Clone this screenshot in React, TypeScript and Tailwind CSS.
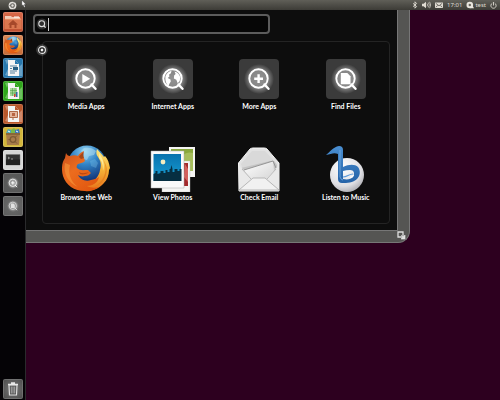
import { useState, type ReactNode } from 'react';

type GlyphKind = 'play' | 'globe' | 'plus' | 'file';

function Lens({ kind, id, className }: { kind: GlyphKind; id: string; className: string }) {
  return (
    <svg viewBox="0 0 40 40" className={className} aria-hidden="true">
      <defs>
        <radialGradient id={id}>
          <stop offset="0" stopColor="#fff" stopOpacity=".45" />
          <stop offset=".6" stopColor="#fff" stopOpacity=".38" />
          <stop offset="1" stopColor="#fff" stopOpacity="0" />
        </radialGradient>
      </defs>
      <circle cx="20" cy="20" r="15" fill={`url(#${id})`} />
      <circle cx="19.500" cy="19.500" r="9.200" fill="none" stroke="#fff" strokeWidth="1.900" />
      <path d="M25.500 25.500l4 4.300" stroke="#fff" strokeWidth="2.400" strokeLinecap="round" />
      {kind === 'play' && <path d="M16.300 15v9.500l7.900-4.700z" fill="#fff" />}
      {kind === 'plus' && <path d="M19.600 15.300v8.800M15.200 19.700H24" stroke="#fff" strokeWidth="2.400" />}
      {kind === 'file' && <path d="M14.800 14h6.500l3.200 3.200v8h-9.700z" fill="#fff" />}
      {kind === 'globe' && (
        <path
          d="M12.500 17c1.500-3.500 4-5 6-5l-.6 2.300-2 1.500.7 1.500-1.800 1.600 2.700 1.700.3 2-1.500 2.500-.6 1.800c-2.500-1.400-3.800-5.300-3.200-9.900zM21.500 12.500c3 .8 5 2.700 5.800 6l-.6 3.500-2 2.300-1.400-3.600-2.400-1.200.2-3 1.500-1.500z"
          fill="#fff"
        />
      )}
    </svg>
  );
}

function FirefoxArt({ id, className }: { id: string; className: string }) {
  return (
    <svg viewBox="0 0 48 48" className={className} aria-hidden="true">
      <defs>
        <radialGradient id={`${id}-sea`} cx=".45" cy=".15" r=".85">
          <stop offset="0" stopColor="#8ed0f0" />
          <stop offset=".4" stopColor="#3183c6" />
          <stop offset="1" stopColor="#0b2467" />
        </radialGradient>
        <linearGradient id={`${id}-fox`} x1="0" y1="0" x2=".8" y2="1">
          <stop offset="0" stopColor="#c9501c" />
          <stop offset=".45" stopColor="#ec6c1e" />
          <stop offset="1" stopColor="#e0560f" />
        </linearGradient>
        <linearGradient id={`${id}-tail`} x1="0" y1="0" x2="0" y2="1">
          <stop offset="0" stopColor="#fbe67c" />
          <stop offset=".5" stopColor="#f6b236" />
          <stop offset="1" stopColor="#e8701a" />
        </linearGradient>
      </defs>
      <circle cx="25" cy="20" r="19.500" fill={`url(#${id}-sea)`} />
      <path d="M22 3c5-1 9 0 12 3l-2 4-5 1-2 4-4-1 1-5-3-3z" fill="#c5ebf7" opacity=".45" />
      <path d="M28 16l5-2 3 4-2 5-5-2z" fill="#7ec2e8" opacity=".35" />
      <path
        d="M35 4c2 3 5 5 7 8l1-1c3 3 4 7 5 12l-1 2c0 5-2 10-5 13-5 6-12 8-19 8l1-7c8-2 13-7 14-14 2-6 0-10-2-13-2-2-2-5-1-8z"
        fill={`url(#${id}-tail)`}
      />
      <path d="M41 14c4 8 3 15-1 21-3 4-7 7-12 8 8-1 14-6 16-13 2-6 0-11-3-16z" fill="#df7c1d" opacity=".7" />
      <path d="M37 8c4 6 6 11 4 18 0-6-1-10-4-13z" fill="#fff3a6" opacity=".8" />
      <path
        d="M4 8c1 2 2 3 4 3 3-1 6-1 8 0 1-2 3-4 6-5-1 3-1 5 0 7l1 3c-2 2-5 2-7 3-1 1-2 3-1 4 3 3 7 2 11 2l3 3c-2 2-3 3-6 3-3 1-5 0-7-1 2 4 7 7 13 5 3-1 5-1 8-3-1 6-7 9-12 9 4 2 8 2 12 1-4 3-9 5-14 4C12 46 4 40 1 31-1 24 0 17 3 13z"
        fill={`url(#${id}-fox)`}
      />
      <path d="M3 18c-2 10 3 20 13 24C8 36 6 28 8 20z" fill="#f79a3c" opacity=".6" />
      <path d="M17 12c1-2 3-4 5-5-1 2-1 4 0 6l-3 1z" fill="#7d3413" opacity=".6" />
      <path d="M17 27c3 2 7 1 10 0-2 2-6 3-9 2z" fill="#9e330d" opacity=".6" />
    </svg>
  );
}

function PhotosArt() {
  return (
    <svg viewBox="0 0 46 46" className="size-[46px]" aria-hidden="true">
      <defs>
        <linearGradient id="photo-sky" x1="0" y1="0" x2="0" y2="1">
          <stop offset="0" stopColor="#0872ae" />
          <stop offset="1" stopColor="#19a0d5" />
        </linearGradient>
      </defs>
      <path d="M19 1h26v30H19z" fill="#f5f5f3" />
      <path d="M21 3h22v22H21z" fill="#89a83c" />
      <path d="M32 10c4-4 8-4 11-3v18H32z" fill="#b9cb70" opacity=".6" />
      <path d="M12 15h28v31H12z" fill="#f5f5f3" stroke="#bbb" strokeWidth=".4" />
      <path d="M14 17h24v23H14z" fill="#a32a2c" />
      <path d="M35 18l3 5v13l-4-5z" fill="#d4605c" />
      <path d="M1 5h33v37H1z" fill="#fafafa" stroke="#aaa" strokeWidth=".5" />
      <path d="M3.500 8H31v27H3.500z" fill="url(#photo-sky)" />
      <circle cx="13" cy="16" r="2.400" fill="#f4edc0" />
      <path
        d="M3.500 28l2-1v-2h2v3l3-1v-2h3v2h2v-3h2v2h2v-3h1l1-4 1 4v3h2v-3h3v2h2v-2h2v12h-28z"
        fill="#062f42"
      />
    </svg>
  );
}

function MailArt() {
  return (
    <svg viewBox="0 0 44 46" className="h-[46px] w-11" aria-hidden="true">
      <defs>
        <linearGradient id="mail-paper" x1="0" y1="0" x2="1" y2="1">
          <stop offset="0" stopColor="#fff" />
          <stop offset="1" stopColor="#d4d4d4" />
        </linearGradient>
      </defs>
      <path d="M1.500 17L13 3q1.500-1 3-1h11q2 0 3 1l12 14v28h-40z" fill="#e2e2e2" stroke="#f4f4f4" />
      <path d="M4 18L15 5h13l12 13-4 12H8z" fill="#d9d9d9" />
      <path d="M4 22l7 10h21l8-10v-3l-3-4-4 0z" fill="#c4c4c4" />
      <path d="M7 24l29-9 1 9-7 11H14z" fill="url(#mail-paper)" />
      <path d="M7 24l29-9 3 7" fill="none" stroke="#8d8d8d" strokeWidth=".9" />
      <path d="M2 19l13 14L2 44zM42 19L29 33l13 11z" fill="#e9e9e9" />
      <path d="M5 23l9 10M39 23l-9 10" stroke="#a5a5a5" strokeWidth=".7" />
      <path d="M2 44l14-12h12l14 12z" fill="#f1f1f1" stroke="#aaa" strokeWidth=".8" />
    </svg>
  );
}

function MusicArt() {
  return (
    <svg viewBox="0 0 44 46" className="h-[46px] w-11" aria-hidden="true">
      <defs>
        <radialGradient id="music-disc" cx=".4" cy=".3" r=".75">
          <stop offset="0" stopColor="#fff" />
          <stop offset=".7" stopColor="#dedee2" />
          <stop offset="1" stopColor="#a9a9ae" />
        </radialGradient>
        <linearGradient id="music-swan" x1="0" y1="0" x2="0" y2="1">
          <stop offset="0" stopColor="#4a8fd2" />
          <stop offset="1" stopColor="#2563a8" />
        </linearGradient>
      </defs>
      <circle cx="23" cy="29" r="17" fill="url(#music-disc)" />
      <path
        fillRule="evenodd"
        d="M2 9C6 6 9 1 15 0q4 0 4 4v17c6-3 12-3 15 0 3 4 2 9-1 12-4 4-10 4-15 4q-4 0-4-4V8C10 6 7 8 2 9zM19 25v8c5 1 8 0 10-2 2-4 1-7-3-7q-4 0-7 1z"
        fill="url(#music-swan)"
      />
      <path d="M19 31c4 0 6-3 10-3" fill="none" stroke="#5b9ada" strokeWidth="1.200" />
      <path d="M16 4v27q1 3 3 3" fill="none" stroke="#77aee2" strokeWidth=".8" />
      <path d="M26 31.500q3-.5 3.500-2.500" fill="none" stroke="#fff" strokeWidth="1.200" />
    </svg>
  );
}

type Shortcut = { label: string; art: ReactNode };

function tile(kind: GlyphKind) {
  return (
    <span className="block rounded-sm bg-[#3b3b3b]">
      <Lens kind={kind} id={`tile-${kind}`} className="size-10" />
    </span>
  );
}

const lenses: Shortcut[] = [
  { label: 'Media Apps', art: tile('play') },
  { label: 'Internet Apps', art: tile('globe') },
  { label: 'More Apps', art: tile('plus') },
  { label: 'Find Files', art: tile('file') },
];

const apps: Shortcut[] = [
  { label: 'Browse the Web', art: <FirefoxArt id="web" className="size-12" /> },
  { label: 'View Photos', art: <PhotosArt /> },
  { label: 'Check Email', art: <MailArt /> },
  { label: 'Listen to Music', art: <MusicArt /> },
];

function ShortcutRow({ items, artBox }: { items: Shortcut[]; artBox: string }) {
  return (
    <div className="grid grid-cols-4">
      {items.map((item) => (
        <button
          key={item.label}
          type="button"
          className="flex flex-col items-center font-['Lato',sans-serif] text-[7px] leading-[8px] font-bold whitespace-nowrap text-white"
        >
          <span className={`flex items-center justify-center ${artBox}`}>{item.art}</span>
          {item.label}
        </button>
      ))}
    </div>
  );
}

function DocumentArt({ color }: { color: string }) {
  return (
    <svg viewBox="0 0 20 20" className="size-5" aria-hidden="true">
      <path d="M2 2l4-1-2 6zM2 17l3-6v7zM16 9l3-3v12h-4z" fill="#fff" opacity=".3" />
      <path d="M5 2h7l4 4v12H5z" fill="#f4f4f4" />
      <path d="M12 2v4h4z" fill={color} />
      {color === '#2777ad' && (
        <>
          <path d="M7 8h7M7 13h7M7 15h5" stroke="#557f9c" />
          <path d="M10 9h5v3h-5z" fill="#285f83" />
          <path d="M7 10.500h2" stroke="#557f9c" />
        </>
      )}
      {color === '#2fa51b' && (
        <>
          <path d="M7 7h7v8H7z" fill="#a9d79b" />
          <path d="M7 9.500h7M7 12h7M9.500 7v8M12 7v8" stroke="#439b3a" strokeWidth=".5" />
          <path d="M11 16v-3h1.500v3z" fill="#cf4431" />
          <path d="M13 16v-5h1.500v5z" fill="#3067a6" />
        </>
      )}
      {color === '#b9572b' && (
        <>
          <path d="M6.500 7.500h8v6h-8z" fill="#e5b69e" stroke="#af6948" />
          <path d="M9 9h3v3H9z" fill="#b86442" />
          <path d="M10 14v2" stroke="#af6948" />
        </>
      )}
    </svg>
  );
}

const launcher: { name: string; tint: string; art: ReactNode }[] = [
  {
    name: 'Home Folder',
    tint: 'bg-linear-to-b from-[#d9694a] to-[#bd5030]',
    art: (
      <svg viewBox="0 0 20 20" className="size-5" aria-hidden="true">
        <path d="M2 4h6l1 1h8v3H2z" fill="#f1cbb9" />
        <path d="M11 5h5" stroke="#fff" />
        <path d="M1.500 7h17v10h-17z" fill="#d9764f" />
        <path d="M2 7h16" stroke="#ffb794" strokeWidth=".7" />
        <path d="M10 8l5 4.500h-1.500V16h-2v-3h-3v3h-2v-3.500H5z" fill="#a5482a" />
      </svg>
    ),
  },
  { name: 'Firefox', tint: 'bg-linear-to-b from-[#db8a58] to-[#c56b38]', art: <FirefoxArt id="dock" className="size-[18px]" /> },
  { name: 'Writer', tint: 'bg-[#2777ad]', art: <DocumentArt color="#2777ad" /> },
  { name: 'Calc', tint: 'bg-[#2fa51b]', art: <DocumentArt color="#2fa51b" /> },
  { name: 'Impress', tint: 'bg-[#b9572b]', art: <DocumentArt color="#b9572b" /> },
  {
    name: 'Software Centre',
    tint: 'bg-[#d3b63c]',
    art: (
      <svg viewBox="0 0 20 20" className="size-5" aria-hidden="true">
        <path d="M3 6l2-4 4 1 1 4z" fill="#4aa7b8" />
        <path d="M8 3l3-2 3 3-2 3H8z" fill="#78b94a" />
        <path d="M12 3l4-1 1 5h-5z" fill="#3979b8" />
        <path d="M5 4l2 1M13 4l2 1" stroke="#fff" />
        <path d="M3 6h14l-1 12H4z" fill="#a87c4a" />
        <path d="M3 6h14v2H3z" fill="#8a6638" />
        <circle cx="10" cy="12.500" r="2.800" fill="none" stroke="#7c5a33" strokeWidth="1.300" />
        <path d="M5.500 12.500h2M12.500 10l1.500-1.500M12.500 15l1.500 1.500" stroke="#7c5a33" />
      </svg>
    ),
  },
  {
    name: 'Terminal',
    tint: 'bg-[#d7d7d7]',
    art: (
      <svg viewBox="0 0 20 20" className="size-5" aria-hidden="true">
        <path d="M3 4.500h14v10.500H3z" fill="#343434" stroke="#777" strokeWidth=".5" />
        <path d="M3 9.500h14V15H3z" fill="#222" />
        <path d="M5 7l1.500 1L5 9M8 9h2" fill="none" stroke="#b5b5b5" strokeWidth=".8" />
      </svg>
    ),
  },
  { name: 'Applications', tint: 'bg-radial from-[#5c5c5c] to-[#565656]', art: <Lens kind="plus" id="dock-apps" className="size-4" /> },
  { name: 'Files and Folders', tint: 'bg-radial from-[#6c6c6c] to-[#5a5a5a]', art: <Lens kind="file" id="dock-files" className="size-4 opacity-80" /> },
];

function LauncherButton({ name, tint, children }: { name: string; tint: string; children: ReactNode }) {
  return (
    <button
      type="button"
      aria-label={name}
      className={`flex size-5 shrink-0 items-center justify-center overflow-hidden rounded-xs inset-ring inset-ring-white/15 ${tint}`}
    >
      {children}
    </button>
  );
}

function TopBar() {
  return (
    <header className="flex h-[10px] shrink-0 items-center bg-linear-to-b from-[#605f58] to-[#3d3c37] pr-[3px] font-['Noto_Sans',sans-serif] text-[6px] leading-[8px] text-[#dfdbd2]">
      <button type="button" aria-label="Dash home" className="ml-2">
        <svg viewBox="0 0 10 10" className="size-[9px]" aria-hidden="true">
          <circle cx="5" cy="5" r="4.300" fill="#e4e2dd" />
          <circle cx="5" cy="5" r="2" fill="none" stroke="#65635d" strokeWidth="1.200" />
          <path d="M1.500 5H3M6 2.500l1-1M6 7.500l1 1" stroke="#65635d" strokeWidth=".8" />
        </svg>
      </button>
      <svg viewBox="0 0 6 9" className="ml-1 h-2 w-[6px] self-start" aria-hidden="true">
        <path d="M.5 0v6.500l1.500-1 1.200 2.800 1.300-.6-1.200-2.500h2z" fill="#fff" stroke="#111" strokeWidth=".4" />
      </svg>
      <div className="ml-auto flex items-center">
        <svg viewBox="0 0 6 8" className="h-2 w-[6px]" aria-hidden="true">
          <path d="M1 2.300l3.600 3.200L3 7.200V.8l1.600 1.700L1 5.700" fill="none" stroke="#dfdbd2" strokeWidth=".9" />
        </svg>
        <svg viewBox="0 0 9 8" className="ml-1 h-2 w-[9px]" aria-hidden="true">
          <path d="M0 2.700h1.500L4 .8v6.400L1.500 5.300H0z" fill="#dfdbd2" />
          <path d="M5 2.500q1.200 1.500 0 3M6.300 1.500q2 2.500 0 5M7.600.8q2.200 3.200 0 6.400" fill="none" stroke="#dfdbd2" strokeWidth=".7" />
        </svg>
        <svg viewBox="0 0 8 8" className="ml-1 h-2 w-2" aria-hidden="true">
          <path d="M0 1.500h8v5.500H0z" fill="#dfdbd2" />
          <path d="M.8 2.300L4 4.800l3.200-2.500M.8 6.300l2-2M7.200 6.300l-2-2" fill="none" stroke="#55534d" strokeWidth=".8" />
        </svg>
        <time className="ml-1">17:01</time>
        <svg viewBox="0 0 8 8" className="ml-1 size-2" aria-hidden="true">
          <circle cx="3.800" cy="4" r="3.300" fill="#e8e5de" />
          <path d="M4 7.300h4L6.500 4.500z" fill="#e8e5de" />
          <circle cx="3.800" cy="4" r="1.200" fill="#69665f" />
        </svg>
        <span className="ml-px">test</span>
        <svg viewBox="0 0 8 8" className="ml-1 size-[7px]" aria-hidden="true">
          <path d="M2.500 1.500a3 3 0 1 0 3 0M4 0v4" fill="none" stroke="#dfdbd2" />
        </svg>
      </div>
    </header>
  );
}

function Dash() {
  const [query, setQuery] = useState('');

  return (
    <main className="relative mr-[90px] flex-1 self-start rounded-br-xl border-r border-b border-[#777] bg-[#555553] pr-[11px] pb-[11px]">
      <div className="border-r border-b border-[#777] bg-[#0d0d0d] pt-1 pr-[7px] pb-[6px] pl-[7px]">
        <label className="flex h-5 w-[237px] items-center rounded-sm border-2 border-[#5c5c5c] bg-[#060606] pl-px">
          <svg viewBox="0 0 12 12" className="size-3" aria-hidden="true">
            <circle cx="6" cy="6" r="5.500" fill="#fff" opacity=".17" />
            <circle cx="5.700" cy="5.700" r="2.900" fill="none" stroke="#ddd" strokeWidth="1.100" />
            <path d="M7.700 7.700l1.900 1.900" stroke="#ddd" strokeWidth="1.300" />
          </svg>
          {query === '' && <span className="h-[13px] w-px bg-[#ccc]" />}
          <input
            type="text"
            aria-label="Search"
            value={query}
            onChange={(e) => setQuery(e.target.value)}
            className="min-w-0 flex-1 bg-transparent px-px text-[8px] text-white outline-none"
          />
        </label>

        <section className="relative mt-[7px] ml-[9px] rounded-sm border border-[#242424] pt-[17px] pb-[22px]">
          <button type="button" aria-label="Close shortcuts" className="absolute top-[2px] -left-[7px] size-3">
            <svg viewBox="0 0 12 12" className="size-3" aria-hidden="true">
              <circle cx="6" cy="6" r="5.800" fill="#fff" opacity=".2" />
              <circle cx="6" cy="6" r="3.400" fill="#222" stroke="#eee" strokeWidth="1.100" />
              <path d="M4.900 4.900l2.200 2.200M7.100 4.900L4.900 7.100" stroke="#fff" strokeWidth="1.100" />
            </svg>
          </button>
          <ShortcutRow items={lenses} artBox="h-[43px] pb-[3px]" />
          <div className="mt-[35px]">
            <ShortcutRow items={apps} artBox="h-12" />
          </div>
        </section>
      </div>
      <button type="button" aria-label="Resize dash" className="absolute right-[3px] bottom-[2px] size-[9px]">
        <svg viewBox="0 0 9 9" className="size-[9px]" aria-hidden="true">
          <path d="M1 1h5v5H1z" fill="none" stroke="#ddd" strokeWidth="1.300" />
          <path d="M4 4l3 3M8 4v4H4z" fill="#e8e8e8" stroke="#ddd" strokeWidth=".7" />
        </svg>
      </button>
    </main>
  );
}

export default function App() {
  return (
    <div className="flex min-h-screen flex-col bg-[#2d001f] font-['Lato',sans-serif]">
      <TopBar />
      <div className="flex flex-1">
        <nav aria-label="Launcher" className="flex w-[26px] shrink-0 flex-col gap-[3px] border-r border-[#2a2a2c] bg-[#050306] pt-[2px] pb-px pl-[3px]">
          {launcher.map((item) => (
            <LauncherButton key={item.name} name={item.name} tint={item.tint}>
              {item.art}
            </LauncherButton>
          ))}
          <div className="mt-auto">
            <LauncherButton name="Trash" tint="bg-radial from-[#777] to-[#4b4b4b]">
              <svg viewBox="0 0 20 20" className="size-5" aria-hidden="true">
                <path d="M6 6h8l-.5 10h-7z" fill="#555" stroke="#ddd" strokeWidth="1.200" />
                <path d="M5 5.500h10M8 4h4" stroke="#e8e8e8" strokeWidth="1.500" />
                <path d="M8.300 7.500v7M10 7.500v7M11.700 7.500v7" stroke="#bbb" strokeWidth=".8" />
              </svg>
            </LauncherButton>
          </div>
        </nav>
        <Dash />
      </div>
    </div>
  );
}
